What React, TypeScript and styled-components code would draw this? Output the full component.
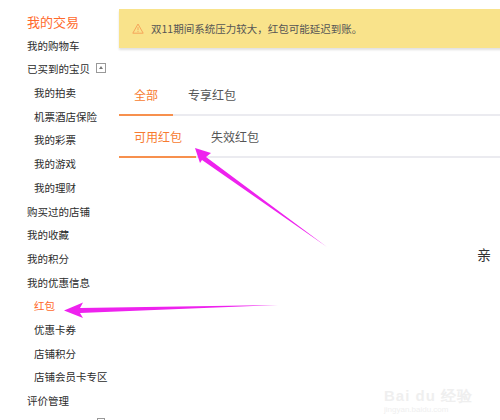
import React from "react";
import styled, { createGlobalStyle } from "styled-components";

const GlobalStyle = createGlobalStyle`
  html, body {
    margin: 0;
    padding: 0;
    background: #fff;
  }
  body {
    font-family: "Noto Sans CJK SC", "Noto Sans", sans-serif;
    color: #333;
  }
`;

const Page = styled.div`
  position: relative;
  width: 500px;
  height: 420px;
  overflow: hidden;
  display: flex;
`;

const Sidebar = styled.nav`
  width: 119px;
  flex-shrink: 0;
  display: flex;
  flex-direction: column;
  padding-top: 10px;
`;

const NavItem = styled.div<{ $sub?: boolean; $active?: boolean; $title?: boolean }>`
  height: 23.7px;
  line-height: 23.7px;
  display: flex;
  align-items: center;
  gap: 7px;
  padding-left: ${(p) => (p.$sub ? "34px" : "27px")};
  font-size: ${(p) => (p.$title ? "13px" : "10.5px")};
  color: ${(p) => (p.$active || p.$title ? "#ff6a2c" : "#2b2b2b")};
  white-space: nowrap;
`;

const FoldBox = styled.span`
  width: 8px;
  height: 8px;
  border: 1px solid #999;
  display: inline-flex;
  align-items: center;
  justify-content: center;
  margin-top: -3px;
  margin-left: -1px;

  &::after {
    content: "";
    border-left: 2.5px solid transparent;
    border-right: 2.5px solid transparent;
    border-bottom: 3px solid #777;
  }
`;

const Main = styled.main`
  flex: 1;
  display: flex;
  flex-direction: column;
  padding-top: 9px;
`;

const Notice = styled.div`
  height: 39px;
  margin-right: -20px;
  background: #f9e38b;
  box-shadow: 0 2px 2px rgba(0, 0, 0, 0.12);
  display: flex;
  align-items: center;
  gap: 7px;
  padding-left: 13px;
  font-size: 10.5px;
  color: #555;
`;

const TabBar = styled.div<{ $top: number }>`
  margin-top: ${(p) => p.$top}px;
  height: 40px;
  display: flex;
  align-items: stretch;
  border-bottom: 2px solid #ebebf0;
`;

const Tab = styled.div<{ $active?: boolean; $pad: number }>`
  padding: 0 ${(p) => p.$pad}px 0 15px;
  display: flex;
  align-items: center;
  font-size: 12px;
  color: ${(p) => (p.$active ? "#f77b30" : "#555")};
  margin-bottom: -2px;
  border-bottom: 2px solid ${(p) => (p.$active ? "#f7904d" : "transparent")};
`;

const Empty = styled.div`
  margin-top: 86px;
  padding-left: 358px;
  font-size: 14px;
  color: #333;
  white-space: nowrap;
`;

const Overlay = styled.svg`
  position: absolute;
  left: 0;
  top: 0;
  pointer-events: none;
`;

const Watermark = styled.div`
  position: absolute;
  left: 384px;
  top: 388px;
  color: #efefef;
  font-family: "Liberation Sans", sans-serif;
  line-height: 1;
`;

const WmBrand = styled.div`
  font-size: 15px;
  font-weight: bold;
  letter-spacing: 1px;
`;

const WmUrl = styled.div`
  font-size: 8px;
  margin-top: 3px;
`;

const navItems: { label: string; sub?: boolean; active?: boolean; fold?: boolean }[] = [
  { label: "我的购物车" },
  { label: "已买到的宝贝", fold: true },
  { label: "我的拍卖", sub: true },
  { label: "机票酒店保险", sub: true },
  { label: "我的彩票", sub: true },
  { label: "我的游戏", sub: true },
  { label: "我的理财", sub: true },
  { label: "购买过的店铺" },
  { label: "我的收藏" },
  { label: "我的积分" },
  { label: "我的优惠信息" },
  { label: "红包", sub: true, active: true },
  { label: "优惠卡券", sub: true },
  { label: "店铺积分", sub: true },
  { label: "店铺会员卡专区", sub: true },
  { label: "评价管理" },
];

const WarnIcon = () => (
  <svg width="12" height="11" viewBox="0 0 12 11">
    <path d="M6 1 L11.2 10.2 H0.8 Z" fill="none" stroke="#f5a55a" strokeWidth="1" strokeLinejoin="round" />
    <path d="M6 4.2 V7.2" stroke="#f5a55a" strokeWidth="1" />
    <circle cx="6" cy="8.6" r="0.6" fill="#f5a55a" />
  </svg>
);

const App = () => {
  return (
    <Page>
      <GlobalStyle />
      <Sidebar>
        <NavItem $title>我的交易</NavItem>
        {navItems.map((item) => (
          <NavItem key={item.label} $sub={item.sub} $active={item.active}>
            {item.label}
            {item.fold ? <FoldBox /> : null}
          </NavItem>
        ))}
      </Sidebar>
      <Main>
        <Notice>
          <WarnIcon />
          <span>双11期间系统压力较大，红包可能延迟到账。</span>
        </Notice>
        <TabBar $top={26}>
          <Tab $active $pad={15}>全部</Tab>
          <Tab $pad={15}>专享红包</Tab>
        </TabBar>
        <TabBar $top={0}>
          <Tab $active $pad={14}>可用红包</Tab>
          <Tab $pad={15}>失效红包</Tab>
        </TabBar>
        <Empty>亲</Empty>
      </Main>
      <Watermark>
        <WmBrand>Bai du 经验</WmBrand>
        <WmUrl>jingyan.baidu.com</WmUrl>
      </Watermark>
      <Overlay width="500" height="420" viewBox="0 0 500 420">
        {/* arrow to 可用红包 */}
        <path d="M195 148 L211 153 L206 157 L327 247 L202 160 L200 163 Z" fill="#ee22ee" />
        {/* arrow to 红包 */}
        <path d="M64 310.5 L83 302.5 L80 308 L278 305 L80 313 L83 318 Z" fill="#ee22ee" />
        {/* next item's fold box, clipped at the bottom */}
        <rect x="97.5" y="418.5" width="7" height="6" fill="none" stroke="#999" />
      </Overlay>
    </Page>
  );
};

export default App;
